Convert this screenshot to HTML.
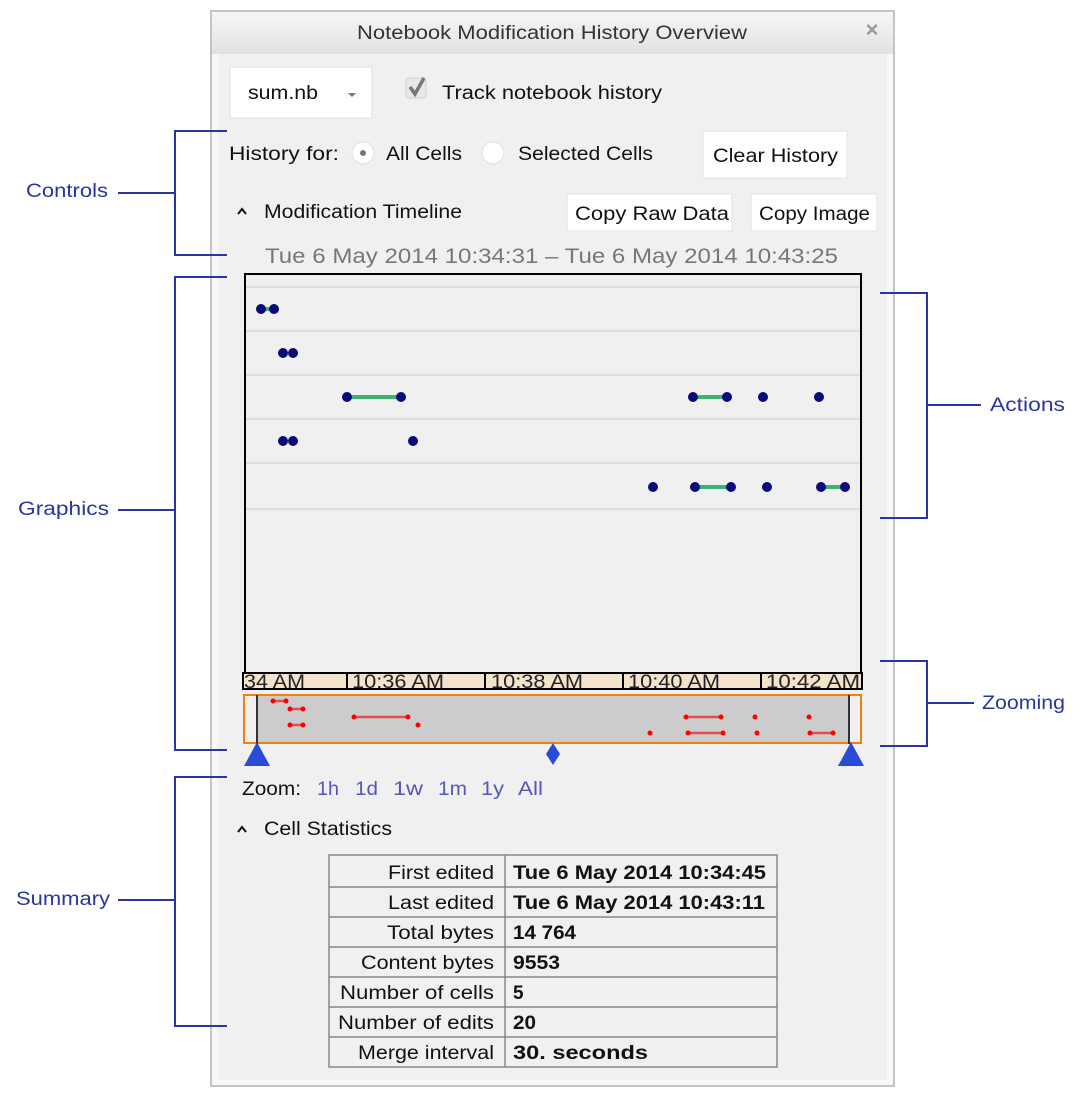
<!DOCTYPE html>
<html><head><meta charset="utf-8"><style>
html,body{margin:0;padding:0;background:#fff;width:1082px;height:1094px;overflow:hidden}
svg{display:block}
text{font-family:"Liberation Sans",Arial,sans-serif}
</style></head><body>
<svg width="1082" height="1094" viewBox="0 0 1082 1094" xmlns="http://www.w3.org/2000/svg">
<defs><linearGradient id="tb" x1="0" y1="0" x2="0" y2="1"><stop offset="0" stop-color="#f6f6f6"/><stop offset="1" stop-color="#e2e2e2"/></linearGradient></defs>
<rect x="211" y="11" width="683" height="1075" fill="#f8f8f8" stroke="#c4c4c4" stroke-width="2"/>
<rect x="218" y="53" width="669" height="1027" fill="#f0f0f0"/>
<rect x="212" y="12" width="681" height="41" fill="url(#tb)"/>
<line x1="212" y1="53" x2="893" y2="53" stroke="#d8d8d8"/>
<text x="357" y="39" font-size="19" fill="#333" textLength="390" lengthAdjust="spacingAndGlyphs">Notebook Modification History Overview</text>
<text x="872" y="37" font-size="22" fill="#999" text-anchor="middle" font-weight="bold">×</text>
<rect x="230" y="67" width="142" height="51" fill="#fff" stroke="#e2e2e2"/>
<text x="248" y="99" font-size="19" fill="#111" textLength="70" lengthAdjust="spacingAndGlyphs">sum.nb</text>
<path d="M348 93 L356 93 L352 97 Z" fill="#777"/>
<rect x="406" y="78" width="20" height="20" rx="3" fill="#e8e8e8" stroke="#cfcfcf"/>
<path d="M410 87 L415 94 L424 78" stroke="#777" stroke-width="3.5" fill="none"/>
<text x="442" y="99" font-size="19" fill="#111" textLength="220" lengthAdjust="spacingAndGlyphs">Track notebook history</text>
<text x="229" y="160" font-size="19" fill="#111" textLength="110" lengthAdjust="spacingAndGlyphs">History for:</text>
<circle cx="363" cy="153" r="11" fill="#fff" stroke="#ddd"/><circle cx="363" cy="153" r="3" fill="#777"/>
<text x="386" y="160" font-size="19" fill="#111" textLength="76" lengthAdjust="spacingAndGlyphs">All Cells</text>
<circle cx="493" cy="153" r="11" fill="#fff" stroke="#ddd"/>
<text x="518" y="160" font-size="19" fill="#111" textLength="135" lengthAdjust="spacingAndGlyphs">Selected Cells</text>
<rect x="703" y="131" width="144" height="47" fill="#fff" stroke="#e2e2e2"/>
<text x="713" y="162" font-size="19" fill="#111" textLength="125" lengthAdjust="spacingAndGlyphs">Clear History</text>
<path d="M238 214 L242 209 L246 214" stroke="#111" stroke-width="2" fill="none"/>
<text x="264" y="218" font-size="19" fill="#111" textLength="198" lengthAdjust="spacingAndGlyphs">Modification Timeline</text>
<rect x="567" y="194" width="165" height="37" fill="#fff" stroke="#e2e2e2"/>
<text x="575" y="220" font-size="19" fill="#111" textLength="154" lengthAdjust="spacingAndGlyphs">Copy Raw Data</text>
<rect x="751" y="194" width="126" height="37" fill="#fff" stroke="#e2e2e2"/>
<text x="759" y="220" font-size="19" fill="#111" textLength="111" lengthAdjust="spacingAndGlyphs">Copy Image</text>
<text x="265" y="263" font-size="21" fill="#777" textLength="573" lengthAdjust="spacingAndGlyphs">Tue 6 May 2014 10:34:31 – Tue 6 May 2014 10:43:25</text>
<rect x="245" y="274" width="616" height="399" fill="#f0f0f0" stroke="#000" stroke-width="2"/>
<g stroke="#d6d6d6" stroke-width="1.5">
<line x1="246" y1="287" x2="860" y2="287"/><line x1="246" y1="331" x2="860" y2="331"/><line x1="246" y1="375" x2="860" y2="375"/><line x1="246" y1="419" x2="860" y2="419"/><line x1="246" y1="463" x2="860" y2="463"/><line x1="246" y1="509" x2="860" y2="509"/></g>
<g stroke="#3cb371" stroke-width="4">
<line x1="260" y1="309" x2="275" y2="309"/><line x1="347" y1="397" x2="401" y2="397"/><line x1="693" y1="397" x2="727" y2="397"/><line x1="695" y1="487" x2="731" y2="487"/><line x1="821" y1="487" x2="845" y2="487"/></g>
<g fill="#0a0a78">
<circle cx="261" cy="309" r="5"/><circle cx="274" cy="309" r="5"/>
<circle cx="283" cy="353" r="5"/><circle cx="293" cy="353" r="5"/>
<circle cx="347" cy="397" r="5"/><circle cx="401" cy="397" r="5"/><circle cx="693" cy="397" r="5"/><circle cx="727" cy="397" r="5"/><circle cx="763" cy="397" r="5"/><circle cx="819" cy="397" r="5"/>
<circle cx="283" cy="441" r="5"/><circle cx="293" cy="441" r="5"/><circle cx="413" cy="441" r="5"/>
<circle cx="653" cy="487" r="5"/><circle cx="695" cy="487" r="5"/><circle cx="731" cy="487" r="5"/><circle cx="767" cy="487" r="5"/><circle cx="821" cy="487" r="5"/><circle cx="845" cy="487" r="5"/></g>
<rect x="243" y="673" width="619" height="16" fill="#f3e2cc" stroke="#000" stroke-width="2"/>
<g stroke="#000" stroke-width="2"><line x1="347" y1="673" x2="347" y2="689"/><line x1="485" y1="673" x2="485" y2="689"/><line x1="623" y1="673" x2="623" y2="689"/><line x1="761" y1="673" x2="761" y2="689"/></g>
<g font-size="19" fill="#222"><text x="244" y="688" textLength="61" lengthAdjust="spacingAndGlyphs">34 AM</text><text x="352" y="688" textLength="92" lengthAdjust="spacingAndGlyphs">10:36 AM</text><text x="491" y="688" textLength="92" lengthAdjust="spacingAndGlyphs">10:38 AM</text><text x="628" y="688" textLength="92" lengthAdjust="spacingAndGlyphs">10:40 AM</text><text x="766" y="688" textLength="94" lengthAdjust="spacingAndGlyphs">10:42 AM</text></g>
<rect x="244" y="695" width="617" height="48" fill="#f0f0f0" stroke="#f08010" stroke-width="2"/>
<rect x="257" y="696" width="592" height="46" fill="#cccccc"/>
<line x1="257" y1="695" x2="257" y2="744" stroke="#333" stroke-width="2"/><line x1="849" y1="695" x2="849" y2="744" stroke="#333" stroke-width="2"/>
<g stroke="#e05050" stroke-width="2.5"><line x1="273" y1="701" x2="286" y2="701"/><line x1="290" y1="709" x2="303" y2="709"/><line x1="290" y1="725" x2="303" y2="725"/><line x1="354" y1="717" x2="408" y2="717"/><line x1="686" y1="717" x2="721" y2="717"/><line x1="688" y1="733" x2="723" y2="733"/><line x1="810" y1="733" x2="833" y2="733"/></g>
<g fill="#f00"><circle cx="273" cy="701" r="2.5"/><circle cx="286" cy="701" r="2.5"/><circle cx="290" cy="709" r="2.5"/><circle cx="303" cy="709" r="2.5"/><circle cx="290" cy="725" r="2.5"/><circle cx="303" cy="725" r="2.5"/><circle cx="354" cy="717" r="2.5"/><circle cx="408" cy="717" r="2.5"/><circle cx="418" cy="725" r="2.5"/><circle cx="686" cy="717" r="2.5"/><circle cx="721" cy="717" r="2.5"/><circle cx="755" cy="717" r="2.5"/><circle cx="809" cy="717" r="2.5"/><circle cx="650" cy="733" r="2.5"/><circle cx="688" cy="733" r="2.5"/><circle cx="723" cy="733" r="2.5"/><circle cx="757" cy="733" r="2.5"/><circle cx="810" cy="733" r="2.5"/><circle cx="833" cy="733" r="2.5"/></g>
<g fill="#2a4bd7"><path d="M244 766 L257 742 L270 766 Z"/><path d="M838 766 L851 742 L864 766 Z"/><path d="M553 743 L560 754 L553 765 L546 754 Z"/></g>
<text x="242" y="795" font-size="19" fill="#111" textLength="59" lengthAdjust="spacingAndGlyphs">Zoom:</text>
<g font-size="19" fill="#5555bb"><text x="317" y="795" textLength="22" lengthAdjust="spacingAndGlyphs">1h</text><text x="355" y="795" textLength="23" lengthAdjust="spacingAndGlyphs">1d</text><text x="393" y="795" textLength="30" lengthAdjust="spacingAndGlyphs">1w</text><text x="438" y="795" textLength="29" lengthAdjust="spacingAndGlyphs">1m</text><text x="481" y="795" textLength="23" lengthAdjust="spacingAndGlyphs">1y</text><text x="518" y="795" textLength="25" lengthAdjust="spacingAndGlyphs">All</text></g>
<path d="M238 832 L242 827 L246 832" stroke="#111" stroke-width="2" fill="none"/>
<text x="264" y="835" font-size="19" fill="#111" textLength="128" lengthAdjust="spacingAndGlyphs">Cell Statistics</text>
<g stroke="#888" stroke-width="1.5" fill="none">
<rect x="329" y="855" width="448" height="212"/>
<line x1="505" y1="855" x2="505" y2="1067"/>
<line x1="329" y1="887" x2="777" y2="887"/><line x1="329" y1="917" x2="777" y2="917"/><line x1="329" y1="947" x2="777" y2="947"/><line x1="329" y1="977" x2="777" y2="977"/><line x1="329" y1="1007" x2="777" y2="1007"/><line x1="329" y1="1037" x2="777" y2="1037"/></g>
<g font-size="19" fill="#111">
<text x="388" y="879" textLength="106" lengthAdjust="spacingAndGlyphs">First edited</text><text x="388" y="909" textLength="106" lengthAdjust="spacingAndGlyphs">Last edited</text><text x="387" y="939" textLength="107" lengthAdjust="spacingAndGlyphs">Total bytes</text><text x="361" y="969" textLength="133" lengthAdjust="spacingAndGlyphs">Content bytes</text><text x="340" y="999" textLength="154" lengthAdjust="spacingAndGlyphs">Number of cells</text><text x="338" y="1029" textLength="156" lengthAdjust="spacingAndGlyphs">Number of edits</text><text x="358" y="1059" textLength="136" lengthAdjust="spacingAndGlyphs">Merge interval</text></g>
<g font-size="19" fill="#111" font-weight="bold">
<text x="513" y="879" textLength="253" lengthAdjust="spacingAndGlyphs">Tue 6 May 2014 10:34:45</text><text x="513" y="909" textLength="252" lengthAdjust="spacingAndGlyphs">Tue 6 May 2014 10:43:11</text><text x="513" y="939" textLength="63" lengthAdjust="spacingAndGlyphs">14 764</text><text x="513" y="969" textLength="47" lengthAdjust="spacingAndGlyphs">9553</text><text x="513" y="999">5</text><text x="513" y="1029" textLength="23" lengthAdjust="spacingAndGlyphs">20</text><text x="513" y="1059" textLength="135" lengthAdjust="spacingAndGlyphs">30.  seconds</text></g>
<g stroke="#2b35a0" stroke-width="2" fill="none">
<path d="M227 131 H175 V255 H227 M118 193 H175"/>
<path d="M227 277 H175 V750 H227 M118 510 H175"/>
<path d="M227 777 H175 V1026 H227 M118 900 H175"/>
<path d="M880 293 H927 V518 H880 M927 405 H981"/>
<path d="M880 661 H927 V746 H880 M927 703 H974"/>
</g>
<g font-size="19" fill="#2b35a0">
<text x="26" y="197" textLength="82" lengthAdjust="spacingAndGlyphs">Controls</text><text x="18" y="515" textLength="91" lengthAdjust="spacingAndGlyphs">Graphics</text><text x="16" y="905" textLength="94" lengthAdjust="spacingAndGlyphs">Summary</text><text x="990" y="411" textLength="75" lengthAdjust="spacingAndGlyphs">Actions</text><text x="982" y="709" textLength="83" lengthAdjust="spacingAndGlyphs">Zooming</text></g>
</svg>
</body></html>
